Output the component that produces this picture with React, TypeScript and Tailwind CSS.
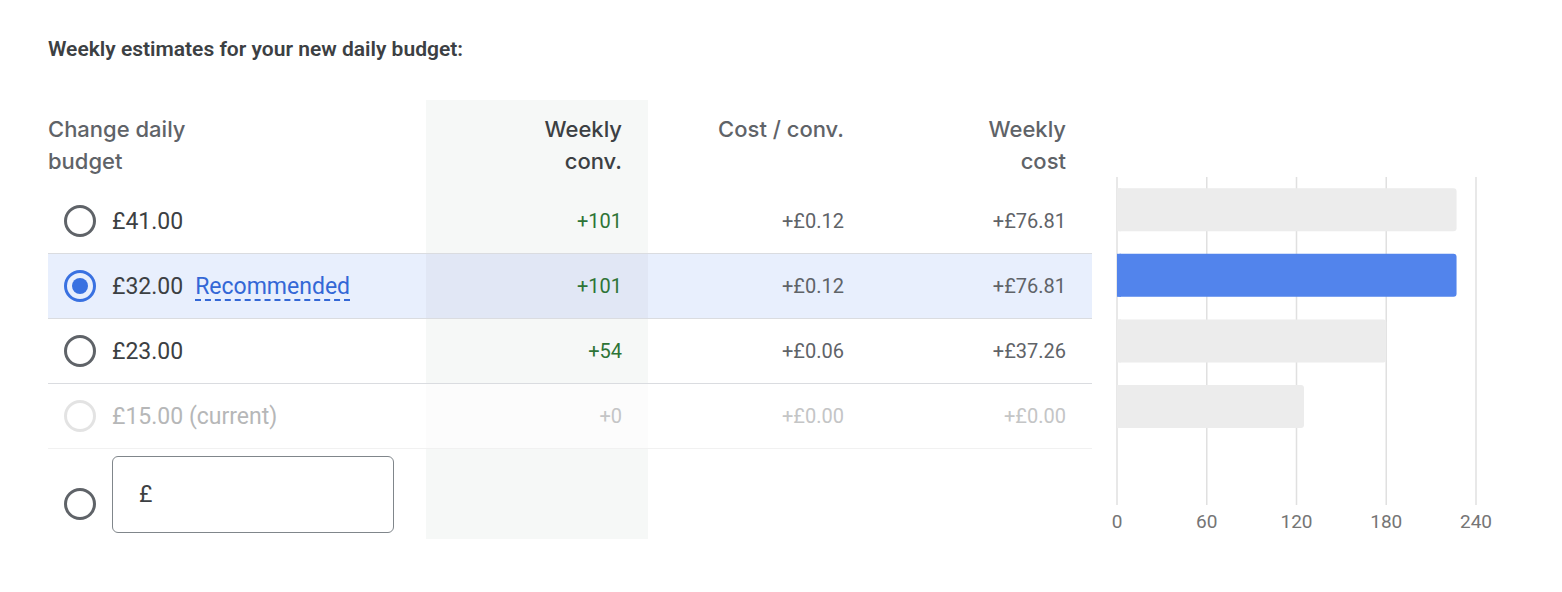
import { useState } from 'react';
import clsx from 'clsx';

interface BudgetOption {
  id: string;
  budget: string;
  note?: string;
  conv: string;
  costPerConv: string;
  cost: string;
  recommended?: boolean;
  current?: boolean;
  bar: number;
}

const options: BudgetOption[] = [
  { id: 'b41', budget: '£41.00', conv: '+101', costPerConv: '+£0.12', cost: '+£76.81', bar: 227 },
  { id: 'b32', budget: '£32.00', conv: '+101', costPerConv: '+£0.12', cost: '+£76.81', recommended: true, bar: 227 },
  { id: 'b23', budget: '£23.00', conv: '+54', costPerConv: '+£0.06', cost: '+£37.26', bar: 180 },
  { id: 'b15', budget: '£15.00', note: '(current)', conv: '+0', costPerConv: '+£0.00', cost: '+£0.00', current: true, bar: 125 },
];

const ticks = [0, 60, 120, 180, 240];
const axisMax = 240;

const percent = (value: number) => `${(value / axisMax) * 100}%`;

interface RadioProps {
  id: string;
  checked: boolean;
  disabled?: boolean;
  label?: string;
  onSelect: () => void;
}

const Radio = ({ id, checked, disabled, label, onSelect }: RadioProps) => (
  <span className="grid h-8 w-8 shrink-0 place-items-center">
    <input
      type="radio"
      id={id}
      name="daily-budget"
      checked={checked}
      disabled={disabled}
      aria-label={label}
      onChange={onSelect}
      className={clsx(
        'peer col-start-1 row-start-1 h-8 w-8 appearance-none rounded-full border-3',
        disabled ? 'border-[#b0b0b0]' : 'border-[#5f6368] checked:border-[#3971e1]',
      )}
    />
    <span className="pointer-events-none col-start-1 row-start-1 hidden h-4 w-4 rounded-full bg-[#3971e1] peer-checked:block" />
  </span>
);

const BudgetChart = ({ selected }: { selected: string }) => (
  <svg
    className="h-[364px] w-full overflow-visible"
    role="img"
    aria-label="Weekly estimates by daily budget"
  >
    {ticks.map((tick) => (
      <g key={tick}>
        <line x1={percent(tick)} x2={percent(tick)} y1="0" y2="328" stroke="#e0e0e0" strokeWidth="1.5" />
        <text
          x={percent(tick)}
          y="351"
          textAnchor="middle"
          className="fill-[#757575] text-[19px]"
        >
          {tick}
        </text>
      </g>
    ))}
    {options.map((option, i) => {
      const y = 11.2 + i * 65.6;
      const fill = option.id === selected ? '#5284ec' : '#ececec';
      return (
        <g key={option.id} fill={fill}>
          <rect x="0" y={y} width={percent(option.bar)} height="43" rx="3" />
          {/* squares off the corners on the axis side */}
          <rect x="0" y={y} width="4" height="43" />
        </g>
      );
    })}
  </svg>
);

const App = () => {
  const [selected, setSelected] = useState('b32');
  const [custom, setCustom] = useState('');

  return (
    <main className="min-h-screen bg-white pt-[33px] pr-[86px] pb-12 pl-12 font-['Roboto',sans-serif] text-[#3c4043]">
      <h1 className="text-[21px] leading-8 font-semibold">Weekly estimates for your new daily budget:</h1>

      <div className="mt-[35px] grid grid-cols-[1044fr_359fr] gap-x-[25px]">
        <table className="w-full table-fixed border-separate border-spacing-0 self-start">
          <colgroup>
            <col />
            <col className="w-[222px]" />
            <col className="w-[222px]" />
            <col className="w-[222px]" />
          </colgroup>
          <thead>
            <tr className="h-[89px] align-top font-['Inter',sans-serif] text-[22px] leading-8 text-[#5f6368]">
              <th scope="col" className="pt-[13px] text-left font-medium">
                Change daily
                <br />
                budget
              </th>
              <th scope="col" className="bg-[#f6f8f7] pt-[13px] pr-[26px] text-right font-medium text-[#3c4043]">
                Weekly
                <br />
                conv.
              </th>
              <th scope="col" className="pt-[13px] pr-[26px] text-right font-medium">
                Cost / conv.
              </th>
              <th scope="col" className="pt-[13px] pr-[26px] text-right font-medium">
                Weekly
                <br />
                cost
              </th>
            </tr>
          </thead>
          <tbody>
            {options.map((option) => (
              <tr
                key={option.id}
                className={clsx(
                  'h-[65px] text-right text-[20px] leading-8 *:border-b',
                  option.current ? 'text-[#c4c5c6] *:border-[#f1f1f1]' : 'text-[#5f6368] *:border-[#dadce0]',
                  option.id === selected && 'bg-[#e8effd]',
                )}
              >
                <td>
                  <div className="flex items-center pl-4 text-[23px]">
                    <div className={clsx('flex items-center gap-4', option.current && 'text-[#b6b7b8]')}>
                      <span className={clsx('flex', option.current && 'opacity-35')}>
                        <Radio
                          id={option.id}
                          checked={option.id === selected}
                          disabled={option.current}
                          onSelect={() => setSelected(option.id)}
                        />
                      </span>
                      <label
                        htmlFor={option.id}
                        className={clsx('pt-0.5 leading-[30px]', !option.current && 'text-[#3c4043]')}
                      >
                        {option.budget} {option.note}
                      </label>
                    </div>
                    {option.recommended && (
                      <a
                        href="#recommended"
                        className="ml-3 border-b-2 border-dashed border-[#3367d6] pt-1 leading-6 text-[#3367d6]"
                      >
                        Recommended
                      </a>
                    )}
                  </div>
                </td>
                <td
                  className={clsx(
                    'pr-[26px]',
                    option.current && 'bg-[#fcfcfc]',
                    !option.current && 'text-[#2e7436]',
                    !option.current && (option.id === selected ? 'bg-[#e1e7f5]' : 'bg-[#f6f8f7]'),
                  )}
                >
                  {option.conv}
                </td>
                <td className="pr-[26px]">{option.costPerConv}</td>
                <td className="pr-[26px]">{option.cost}</td>
              </tr>
            ))}
            <tr className="h-[90px] align-top">
              <td>
                <div className="flex gap-4 pt-[7px] pr-8 pl-4">
                  <div className="flex items-center pt-[18px]">
                    <Radio
                      id="custom"
                      label="Set a custom budget"
                      checked={selected === 'custom'}
                      onSelect={() => setSelected('custom')}
                    />
                  </div>
                  <div className="flex h-[77px] min-w-0 flex-1 items-center gap-1 rounded-md border border-[#80868b] px-[26px] text-[23px] leading-8">
                    <label htmlFor="custom-amount">£</label>
                    <input
                      id="custom-amount"
                      type="text"
                      inputMode="decimal"
                      value={custom}
                      onChange={(e) => setCustom(e.target.value)}
                      onFocus={() => setSelected('custom')}
                      className="w-full min-w-0 bg-transparent outline-none"
                    />
                  </div>
                </div>
              </td>
              <td className="bg-[#f6f8f7]" />
              <td />
              <td />
            </tr>
          </tbody>
        </table>

        <div className="pt-[77px]">
          <BudgetChart selected={selected} />
        </div>
      </div>
    </main>
  );
};

export default App;
